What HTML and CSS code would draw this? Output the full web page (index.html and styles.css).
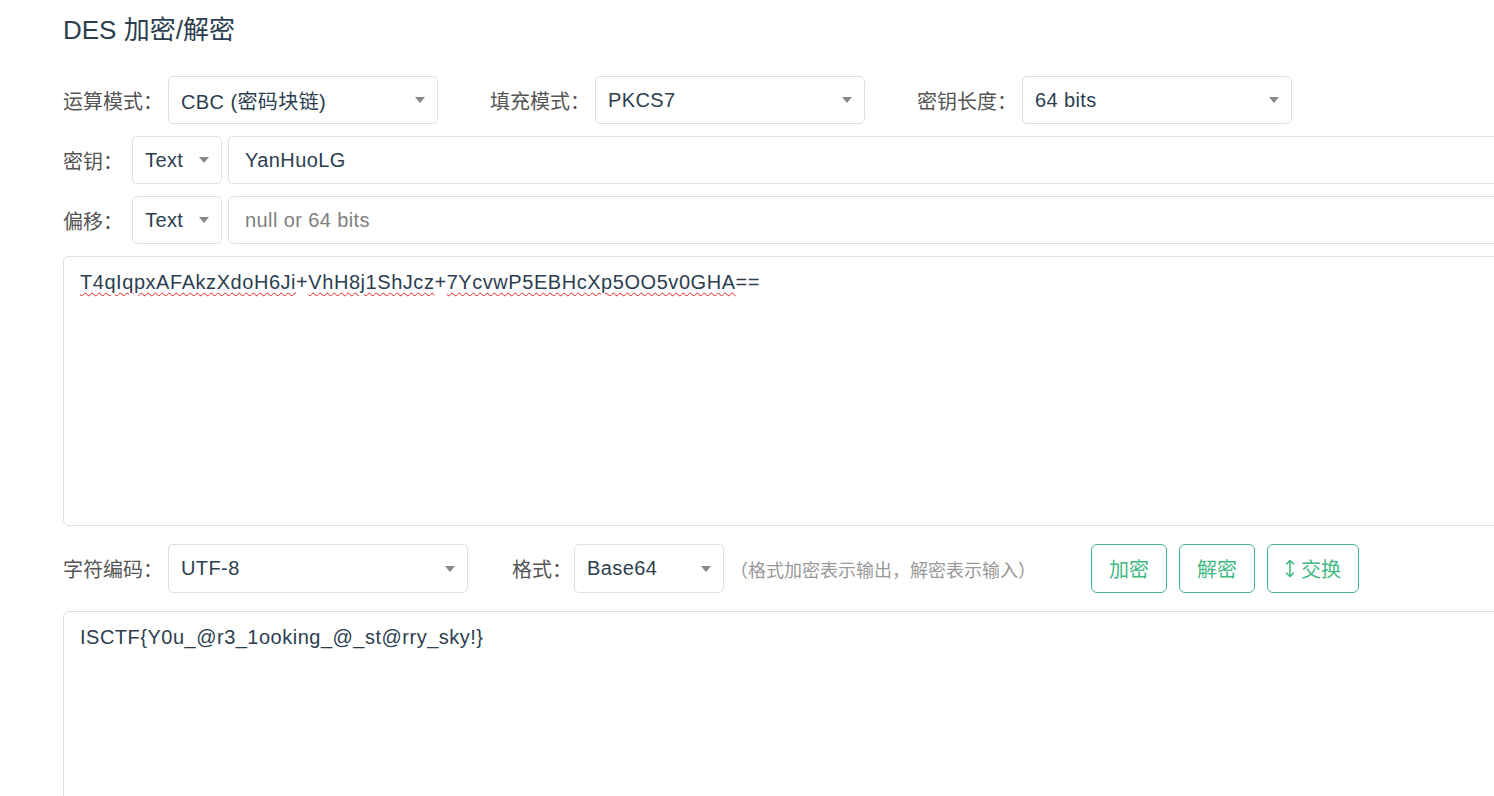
FILE: index.html
```html
<!DOCTYPE html>
<html lang="zh-CN">
<head>
  <meta charset="UTF-8">
  <meta name="viewport" content="width=device-width, initial-scale=1.0">
  <title>DES 加密/解密</title>
  <link rel="stylesheet" href="styles.css">
</head>
<body>
  <div class="page">
    <h1 class="titulo">DES 加密/解密</h1>

    <div class="linha">
      <div class="grupo">
        <label class="rotulo">运算模式：</label>
        <div class="seletor seletor-largo">CBC (密码块链)<span class="seta"></span></div>
      </div>
      <div class="grupo">
        <label class="rotulo">填充模式：</label>
        <div class="seletor seletor-largo">PKCS7<span class="seta"></span></div>
      </div>
      <div class="grupo">
        <label class="rotulo">密钥长度：</label>
        <div class="seletor seletor-largo">64 bits<span class="seta"></span></div>
      </div>
    </div>

    <div class="linha">
      <label class="rotulo rotulo-chave">密钥：</label>
      <div class="seletor seletor-tipo">Text<span class="seta"></span></div>
      <div class="campo">YanHuoLG</div>
    </div>

    <div class="linha">
      <label class="rotulo rotulo-chave">偏移：</label>
      <div class="seletor seletor-tipo">Text<span class="seta"></span></div>
      <div class="campo vazio">null or 64 bits</div>
    </div>

    <div class="caixa caixa-entrada"><span class="erro">T4qIqpxAFAkzXdoH6Ji</span>+<span class="erro">VhH8j1ShJcz</span>+<span class="erro">7YcvwP5EBHcXp5OO5v0GHA</span>==</div>

    <div class="linha linha-opcoes">
      <div class="grupo">
        <label class="rotulo">字符编码：</label>
        <div class="seletor seletor-medio">UTF-8<span class="seta"></span></div>
      </div>
      <div class="grupo">
        <label class="rotulo rotulo-curto">格式：</label>
        <div class="seletor seletor-curto">Base64<span class="seta"></span></div>
        <span class="dica">（格式加密表示输出，解密表示输入）</span>
      </div>
      <div class="botoes">
        <button class="botao">加密</button>
        <button class="botao">解密</button>
        <button class="botao botao-troca">
          <svg width="10" height="19" viewBox="0 0 10 19" fill="none" stroke="currentColor" stroke-width="1.6" stroke-linecap="round" stroke-linejoin="round">
            <path d="M5 1.5v16"/>
            <path d="M1.5 5L5 1.5 8.5 5"/>
            <path d="M1.5 14L5 17.5 8.5 14"/>
          </svg>
          交换
        </button>
      </div>
    </div>

    <div class="caixa caixa-saida">ISCTF{Y0u_@r3_1ooking_@_st@rry_sky!}</div>
  </div>
</body>
</html>
```

FILE: styles.css
```css
* {
  box-sizing: border-box;
  margin: 0;
  padding: 0;
}

body {
  background-color: #fff;
  font-family: 'Liberation Sans', 'Noto Sans CJK SC', sans-serif;
  color: #2c3e50;
  overflow: hidden;
}

.page {
  margin-left: 63px;
  width: 1520px;
  padding-top: 14px;
}

.titulo {
  font-size: 26px;
  font-weight: normal;
  line-height: 32px;
  margin-bottom: 30px;
  color: #2c3e50;
}

.linha {
  display: flex;
  align-items: center;
  height: 48px;
  margin-bottom: 12px;
}

.grupo {
  display: flex;
  align-items: center;
  margin-right: 52px;
}

.rotulo {
  font-size: 20px;
  color: #555;
  margin-right: 5px;
  white-space: nowrap;
}

.rotulo-chave {
  margin-right: 9px;
}

.rotulo-curto {
  margin-right: 2px;
}

.seletor {
  position: relative;
  height: 48px;
  border: 1px solid #dcdfe6;
  border-radius: 5px;
  display: flex;
  align-items: center;
  padding-left: 12px;
  font-size: 20px;
  letter-spacing: 0.4px;
  color: #2c3e50;
  background-color: #fff;
}

.seletor-largo {
  width: 270px;
}

.seletor-tipo {
  width: 90px;
  margin-right: 6px;
}

.seta {
  position: absolute;
  right: 12px;
  top: 50%;
  margin-top: -3px;
  border-left: 5.5px solid transparent;
  border-right: 5.5px solid transparent;
  border-top: 6px solid #888;
}

.campo {
  flex: 1;
  height: 48px;
  border: 1px solid #dcdfe6;
  border-radius: 5px;
  display: flex;
  align-items: center;
  padding-left: 16px;
  font-size: 20px;
  letter-spacing: 0.4px;
  color: #2c3e50;
}

.campo.vazio {
  color: #808080;
}

.caixa {
  border: 1px solid #dcdfe6;
  border-radius: 6px;
  padding: 12px 16px;
  font-size: 20px;
  line-height: 26px;
  letter-spacing: 0.5px;
  color: #2c3e50;
}

.caixa-entrada {
  height: 270px;
  margin-bottom: 18px;
  letter-spacing: 0.55px;
}

.erro {
  text-decoration: underline wavy #e8201a;
  text-decoration-thickness: 1.3px;
  text-underline-offset: 3px;
}

.linha-opcoes {
  height: 49px;
  margin-bottom: 18px;
}

.linha-opcoes .grupo {
  margin-right: 44px;
}

.seletor-medio {
  width: 300px;
  height: 49px;
}

.seletor-curto {
  width: 150px;
  height: 49px;
}

.dica {
  margin-left: 6px;
  font-size: 18px;
  color: #999;
  white-space: nowrap;
}

.botoes {
  display: flex;
  gap: 12px;
  margin-left: 11px;
}

.botao {
  height: 49px;
  padding: 0 17px;
  border: 1px solid #42b983;
  border-radius: 6px;
  background-color: #fff;
  color: #42b983;
  font-family: 'Liberation Sans', 'Noto Sans CJK SC', sans-serif;
  font-size: 20px;
  display: flex;
  align-items: center;
  gap: 6px;
  cursor: pointer;
}

.caixa-saida {
  height: 300px;
}
```
